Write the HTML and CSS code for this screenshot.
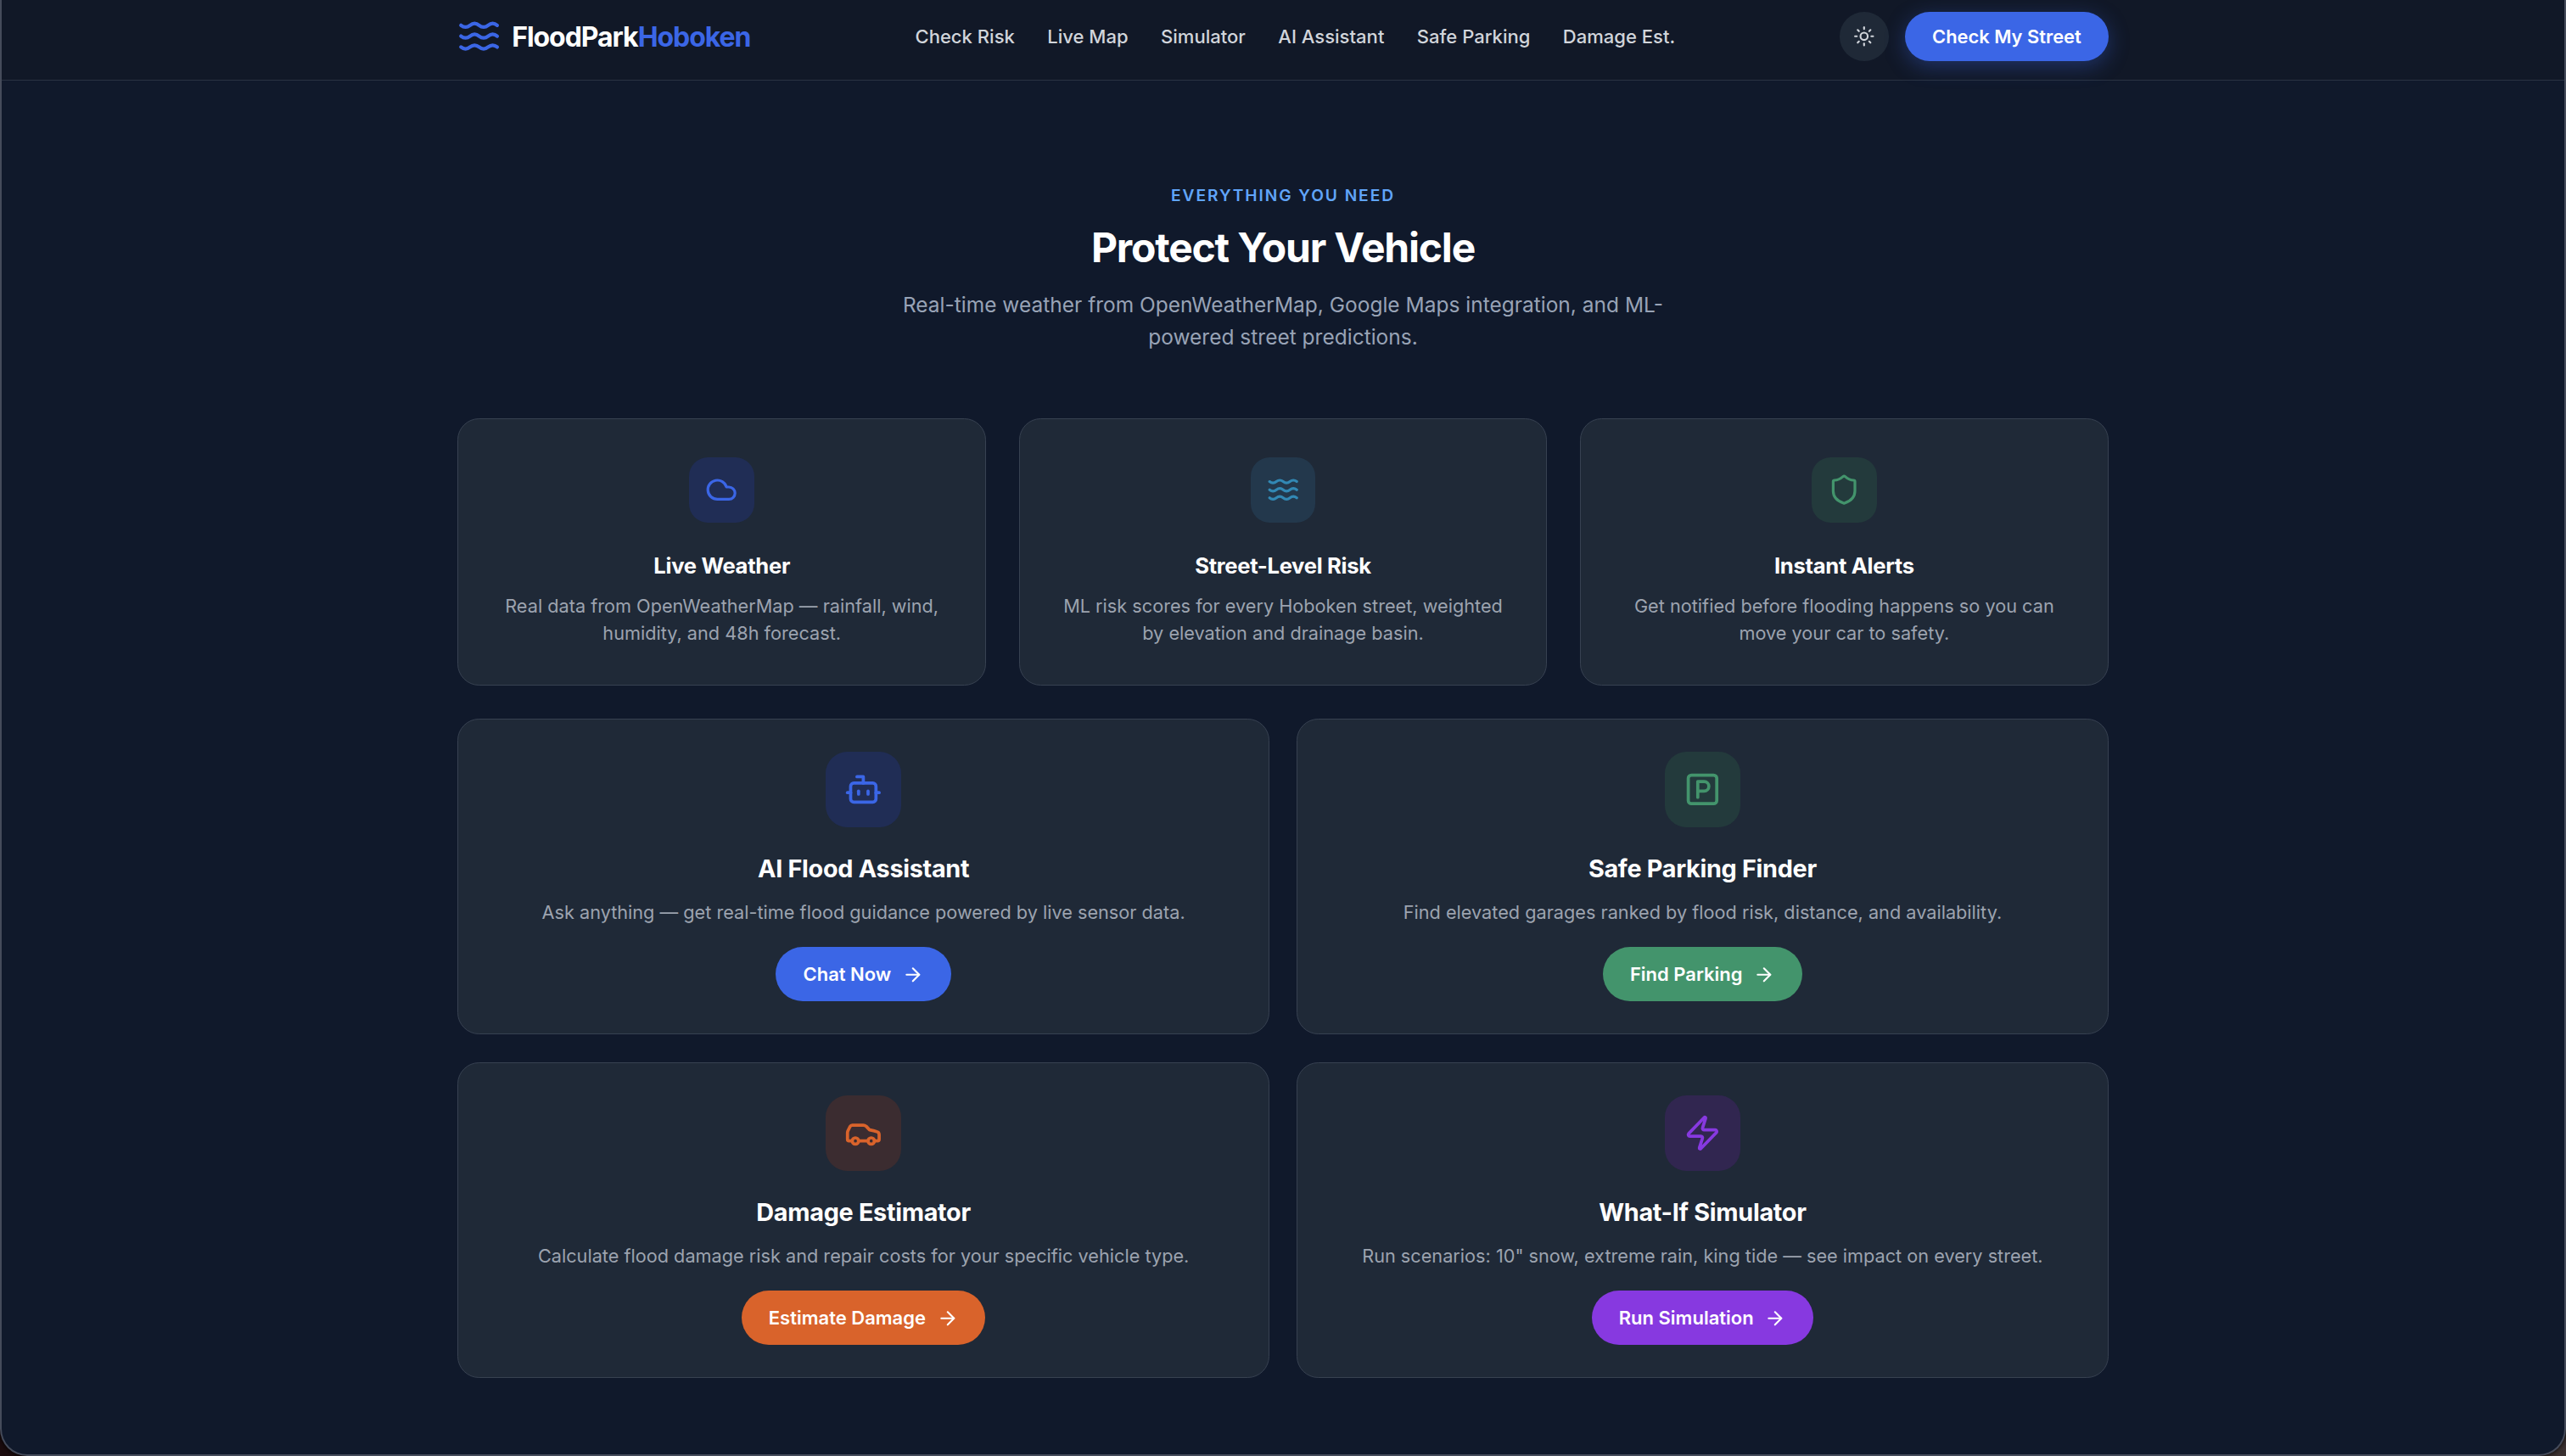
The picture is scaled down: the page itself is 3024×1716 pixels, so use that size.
FILE: index.html
```html
<!DOCTYPE html>
<html lang="en">
<head>
    <meta charset="UTF-8" />
    <meta name="viewport" content="width=device-width, initial-scale=1" />
    <title>FloodPark Hoboken</title>
    <link rel="stylesheet" href="styles.css">
</head>
<body>
<div class="window">
    <header class="topbar">
        <div class="topbar-inner">
            <a class="logo" href="#">
                <svg class="logo-icon" viewBox="0 0 24 24"><path d="M2 6c.6.5 1.2 1 2.5 1C7 7 7 5 9.5 5c2.6 0 2.4 2 5 2 2.5 0 2.5-2 5-2 1.3 0 1.9.5 2.5 1"/><path d="M2 12c.6.5 1.2 1 2.5 1 2.5 0 2.5-2 5-2 2.6 0 2.4 2 5 2 2.5 0 2.5-2 5-2 1.3 0 1.9.5 2.5 1"/><path d="M2 18c.6.5 1.2 1 2.5 1 2.5 0 2.5-2 5-2 2.6 0 2.4 2 5 2 2.5 0 2.5-2 5-2 1.3 0 1.9.5 2.5 1"/></svg>
                <span>FloodPark<em>Hoboken</em></span>
            </a>
            <nav class="nav-links">
                <a href="#">Check Risk</a>
                <a href="#">Live Map</a>
                <a href="#">Simulator</a>
                <a href="#">AI Assistant</a>
                <a href="#">Safe Parking</a>
                <a href="#">Damage Est.</a>
            </nav>
            <div class="nav-actions">
                <button class="theme-btn">
                    <svg viewBox="0 0 24 24"><circle cx="12" cy="12" r="4"/><path d="M12 2v2"/><path d="M12 20v2"/><path d="m4.93 4.93 1.41 1.41"/><path d="m17.66 17.66 1.41 1.41"/><path d="M2 12h2"/><path d="M20 12h2"/><path d="m6.34 17.66-1.41 1.41"/><path d="m19.07 4.93-1.41 1.41"/></svg>
                </button>
                <button class="cta-btn">Check My Street</button>
            </div>
        </div>
    </header>

    <main class="features">
        <div class="section-head">
            <p class="eyebrow">EVERYTHING YOU NEED</p>
            <h2>Protect Your Vehicle</h2>
            <p class="lead">Real-time weather from OpenWeatherMap, Google Maps integration, and ML-powered street predictions.</p>
        </div>

        <div class="grid-three">
            <div class="card">
                <div class="icon-box tint-blue">
                    <svg viewBox="0 0 24 24"><path d="M17.5 19H9a7 7 0 1 1 6.71-9h1.79a4.5 4.5 0 1 1 0 9Z"/></svg>
                </div>
                <h3>Live Weather</h3>
                <p>Real data from OpenWeatherMap — rainfall, wind, humidity, and 48h forecast.</p>
            </div>
            <div class="card">
                <div class="icon-box tint-teal">
                    <svg viewBox="0 0 24 24"><path d="M2 6c.6.5 1.2 1 2.5 1C7 7 7 5 9.5 5c2.6 0 2.4 2 5 2 2.5 0 2.5-2 5-2 1.3 0 1.9.5 2.5 1"/><path d="M2 12c.6.5 1.2 1 2.5 1 2.5 0 2.5-2 5-2 2.6 0 2.4 2 5 2 2.5 0 2.5-2 5-2 1.3 0 1.9.5 2.5 1"/><path d="M2 18c.6.5 1.2 1 2.5 1 2.5 0 2.5-2 5-2 2.6 0 2.4 2 5 2 2.5 0 2.5-2 5-2 1.3 0 1.9.5 2.5 1"/></svg>
                </div>
                <h3>Street-Level Risk</h3>
                <p>ML risk scores for every Hoboken street, weighted by elevation and drainage basin.</p>
            </div>
            <div class="card">
                <div class="icon-box tint-green">
                    <svg viewBox="0 0 24 24"><path d="M20 13c0 5-3.5 7.5-7.66 8.95a1 1 0 0 1-.67-.01C7.5 20.5 4 18 4 13V6a1 1 0 0 1 1-1c2 0 4.5-1.2 6.24-2.72a1.17 1.17 0 0 1 1.52 0C14.51 3.81 17 5 19 5a1 1 0 0 1 1 1z"/></svg>
                </div>
                <h3>Instant Alerts</h3>
                <p>Get notified before flooding happens so you can move your car to safety.</p>
            </div>
        </div>

        <div class="grid-two">
            <div class="card card-big">
                <div class="icon-box tint-blue">
                    <svg viewBox="0 0 24 24"><path d="M12 8V4H8"/><rect width="16" height="12" x="4" y="8" rx="2"/><path d="M2 14h2"/><path d="M20 14h2"/><path d="M15 13v2"/><path d="M9 13v2"/></svg>
                </div>
                <h3>AI Flood Assistant</h3>
                <p>Ask anything — get real-time flood guidance powered by live sensor data.</p>
                <a class="pill pill-blue" href="#">Chat Now
                    <svg viewBox="0 0 24 24"><path d="M5 12h14"/><path d="m12 5 7 7-7 7"/></svg>
                </a>
            </div>
            <div class="card card-big">
                <div class="icon-box tint-green">
                    <svg viewBox="0 0 24 24"><rect width="18" height="18" x="3" y="3" rx="2"/><path d="M9 17V7h4a3 3 0 0 1 0 6H9"/></svg>
                </div>
                <h3>Safe Parking Finder</h3>
                <p>Find elevated garages ranked by flood risk, distance, and availability.</p>
                <a class="pill pill-green" href="#">Find Parking
                    <svg viewBox="0 0 24 24"><path d="M5 12h14"/><path d="m12 5 7 7-7 7"/></svg>
                </a>
            </div>
            <div class="card card-big">
                <div class="icon-box tint-orange">
                    <svg viewBox="0 0 24 24"><path d="M19 17h2c.6 0 1-.4 1-1v-3c0-.9-.7-1.7-1.5-1.9C18.7 10.6 16 10 16 10s-1.3-1.4-2.2-2.3c-.5-.4-1.1-.7-1.8-.7H5c-.6 0-1.1.4-1.4.9l-1.4 2.9A3.7 3.7 0 0 0 2 12v4c0 .6.4 1 1 1h2"/><circle cx="7" cy="17" r="2"/><path d="M9 17h6"/><circle cx="17" cy="17" r="2"/></svg>
                </div>
                <h3>Damage Estimator</h3>
                <p>Calculate flood damage risk and repair costs for your specific vehicle type.</p>
                <a class="pill pill-orange" href="#">Estimate Damage
                    <svg viewBox="0 0 24 24"><path d="M5 12h14"/><path d="m12 5 7 7-7 7"/></svg>
                </a>
            </div>
            <div class="card card-big">
                <div class="icon-box tint-purple">
                    <svg viewBox="0 0 24 24"><path d="M4 14a1 1 0 0 1-.78-1.63l9.9-10.2a.5.5 0 0 1 .86.46l-1.92 6.02A1 1 0 0 0 13 10h7a1 1 0 0 1 .78 1.63l-9.9 10.2a.5.5 0 0 1-.86-.46l1.92-6.02A1 1 0 0 0 11 14z"/></svg>
                </div>
                <h3>What-If Simulator</h3>
                <p>Run scenarios: 10" snow, extreme rain, king tide — see impact on every street.</p>
                <a class="pill pill-purple" href="#">Run Simulation
                    <svg viewBox="0 0 24 24"><path d="M5 12h14"/><path d="m12 5 7 7-7 7"/></svg>
                </a>
            </div>
        </div>
    </main>
</div>
</body>
</html>
```

FILE: styles.css
```css
* {
    box-sizing: border-box;
}
html {
    background: linear-gradient(90deg, #1c0c0e, #3c3232);
}
body {
    margin: 0;
    font-family: Inter, 'Liberation Sans', sans-serif;
    color: #fff;
}
a {
    color: inherit;
    text-decoration: none;
}
svg {
    display: block;
    fill: none;
    stroke: currentColor;
    stroke-width: 2;
    stroke-linecap: round;
    stroke-linejoin: round;
}

/* window frame */
.window {
    height: 1716px;
    overflow: hidden;
    background: #10192b;
    border: 2px solid #454b5a;
    border-top: none;
    border-radius: 0 0 32px 32px;
    box-shadow: 0 0 6px #000;
}

/* top bar */
.topbar {
    height: 95px;
    padding-bottom: 8px;
    background: #111827;
    border-bottom: 1px solid #2a3342;
}
.topbar-inner {
    width: 1945.6px;
    height: 100%;
    margin: 0 auto;
    display: flex;
    align-items: center;
    justify-content: space-between;
}
.logo {
    display: flex;
    align-items: center;
    gap: 12.8px;
    font-size: 32px;
    font-weight: 700;
    letter-spacing: -1.05px;
}
.logo em {
    font-style: normal;
    color: #3b66e6;
}
.logo-icon {
    width: 51.2px;
    height: 51.2px;
    color: #3b66e6;
}
.nav-links {
    display: flex;
    gap: 38.4px;
    font-size: 22.05px;
    font-weight: 500;
    color: #d1d5db;
}
.nav-actions {
    display: flex;
    align-items: center;
    gap: 19.2px;
}
.theme-btn {
    width: 57.6px;
    height: 57.6px;
    padding: 0;
    border: none;
    border-radius: 50%;
    background: #1f2937;
    color: #d1d5db;
    display: flex;
    align-items: center;
    justify-content: center;
}
.theme-btn svg {
    width: 25.6px;
    height: 25.6px;
}
.cta-btn {
    height: 57.6px;
    padding: 0 32px;
    border: none;
    border-radius: 30px;
    background: #3b66e6;
    color: #fff;
    font-family: inherit;
    font-size: 21.9px;
    font-weight: 600;
    box-shadow: 0 6px 24px rgba(59, 102, 230, 0.35);
}

/* features section */
.features {
    width: 1945.6px;
    margin: 0 auto;
    padding-top: 121px;
}
.section-head {
    text-align: center;
}
.eyebrow {
    margin: 0;
    font-size: 19.2px;
    line-height: 28px;
    font-weight: 600;
    letter-spacing: 1.92px;
    color: #60a5fa;
}
.section-head h2 {
    margin: 19px 0 0;
    font-size: 48px;
    line-height: 58px;
    font-weight: 700;
    letter-spacing: -1.2px;
}
.lead {
    width: 920px;
    margin: 19px auto 0;
    font-size: 24.5px;
    line-height: 38.4px;
    color: #98a3b6;
}

.grid-three {
    display: grid;
    grid-template-columns: repeat(3, 1fr);
    gap: 38.4px;
    margin-top: 76px;
}
.grid-two {
    display: grid;
    grid-template-columns: repeat(2, 1fr);
    gap: 33px 32px;
    margin-top: 39px;
}
.card {
    height: 315px;
    padding: 45px 38.4px 0;
    background: #1f2937;
    border: 1px solid #374151;
    border-radius: 25.6px;
    display: flex;
    flex-direction: column;
    align-items: center;
    text-align: center;
}
.card h3 {
    margin: 33px 0 0;
    font-size: 25.6px;
    line-height: 36px;
    font-weight: 700;
    letter-spacing: -0.3px;
}
.card p {
    margin: 13px 0 0;
    font-size: 21.7px;
    line-height: 32.4px;
    color: #9ca3af;
}
.card-big {
    height: 372px;
    padding-top: 38px;
}
.card-big h3 {
    margin-top: 29px;
    font-size: 28.8px;
    line-height: 40px;
}
.card-big p {
    margin-top: 14px;
    line-height: 34px;
}

.icon-box {
    width: 76.8px;
    height: 76.8px;
    border-radius: 22.4px;
    display: flex;
    align-items: center;
    justify-content: center;
    flex: none;
}
.icon-box svg {
    width: 38.4px;
    height: 38.4px;
}
.card-big .icon-box {
    width: 89.6px;
    height: 89.6px;
    border-radius: 25.6px;
}
.card-big .icon-box svg {
    width: 44.8px;
    height: 44.8px;
}
.tint-blue { background: #202d55; color: #3b66e6; }
.tint-teal { background: #23384c; color: #3288b4; }
.tint-green { background: #233a3c; color: #43946c; }
.tint-orange { background: #3b2c30; color: #d9632b; }
.tint-purple { background: #312650; color: #8739e0; }

.pill {
    height: 64px;
    margin-top: 24px;
    padding: 0 32px;
    border-radius: 32px;
    display: flex;
    align-items: center;
    gap: 12.8px;
    font-size: 22px;
    font-weight: 600;
    color: #fff;
}
.pill svg {
    width: 25.6px;
    height: 25.6px;
}
.pill-blue { background: #3b66e6; }
.pill-green { background: #43946c; }
.pill-orange { background: #d9632b; }
.pill-purple { background: #8739e0; }
```
